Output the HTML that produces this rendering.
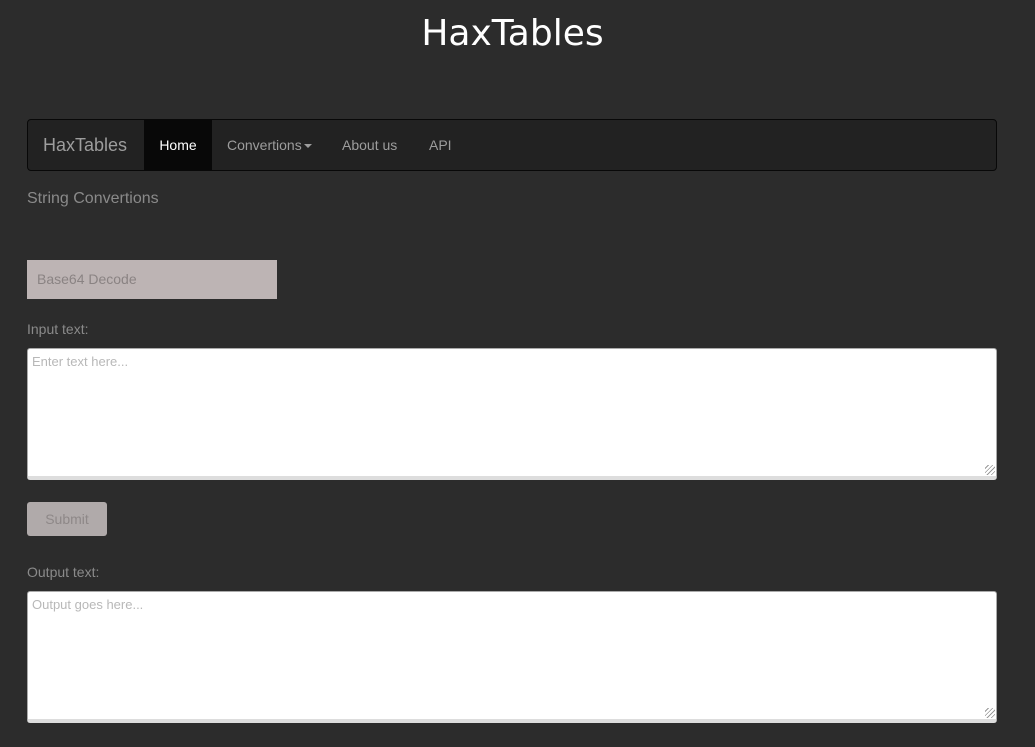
<!DOCTYPE html>
<html><head><meta charset="utf-8"><style>
*{box-sizing:border-box;margin:0;padding:0}
body{width:1035px;height:747px;background:#2c2c2c;font-family:"Liberation Sans","DejaVu Sans",sans-serif;position:relative;overflow:hidden}
h1{position:absolute;top:13px;left:-5px;width:1035px;text-align:center;color:#fff;font-weight:normal;font-size:36px;font-family:"DejaVu Sans",sans-serif}
.nav{position:absolute;left:27px;top:119px;width:970px;height:52px;background:#222;border:1px solid #080808;border-radius:4px}
.nav span{position:absolute;top:0;line-height:50px;color:#9d9d9d;font-size:14px}
.brand{left:15px;font-size:18px!important;color:#9d9d9d}
.home{left:116px;width:68px;background:#080808;text-align:center;color:#fff!important}
.caret{display:inline-block;border-top:4px solid #9d9d9d;border-left:4px solid transparent;border-right:4px solid transparent;vertical-align:middle;margin-left:2px}
.t{position:absolute;color:#8a8a8a;font-size:16px}
.sel{position:absolute;left:27px;top:260px;width:250px;height:39px;background:#bdb4b4;color:#8a8383;font-size:14px;padding-left:10px;line-height:39px}
.ta{position:absolute;left:27px;width:970px;height:132px;background:#fff;border:1px solid #aaa;border-radius:3px;border-bottom:4px solid #ddd}
.ta span{position:absolute;left:4px;top:5px;color:#b8b8b8;font-size:13px}
.lbl{position:absolute;left:27px;color:#8a8a8a;font-size:14px}
.btn{position:absolute;left:27px;top:502px;width:80px;height:34px;background:#b0aaaa;border-radius:3px;color:#8e8888;font-size:14px;text-align:center;line-height:34px}
.grip{position:absolute;right:1px;bottom:1px;width:10px;height:10px;background:repeating-linear-gradient(135deg,transparent 0 2px,#999 2px 3px)}
</style></head><body>
<h1>HaxTables</h1>
<div class="nav">
<span class="brand">HaxTables</span>
<span class="home">Home</span>
<span style="left:199px">Convertions<i class="caret"></i></span>
<span style="left:314px">About us</span>
<span style="left:401px">API</span>
</div>
<div class="t" style="left:27px;top:190px">String Convertions</div>
<div class="sel">Base64 Decode</div>
<div class="lbl" style="top:321px">Input text:</div>
<div class="ta" style="top:348px"><span>Enter text here...</span><i class="grip"></i></div>
<div class="btn">Submit</div>
<div class="lbl" style="top:564px">Output text:</div>
<div class="ta" style="top:591px"><span>Output goes here...</span><i class="grip"></i></div>
</body></html>
